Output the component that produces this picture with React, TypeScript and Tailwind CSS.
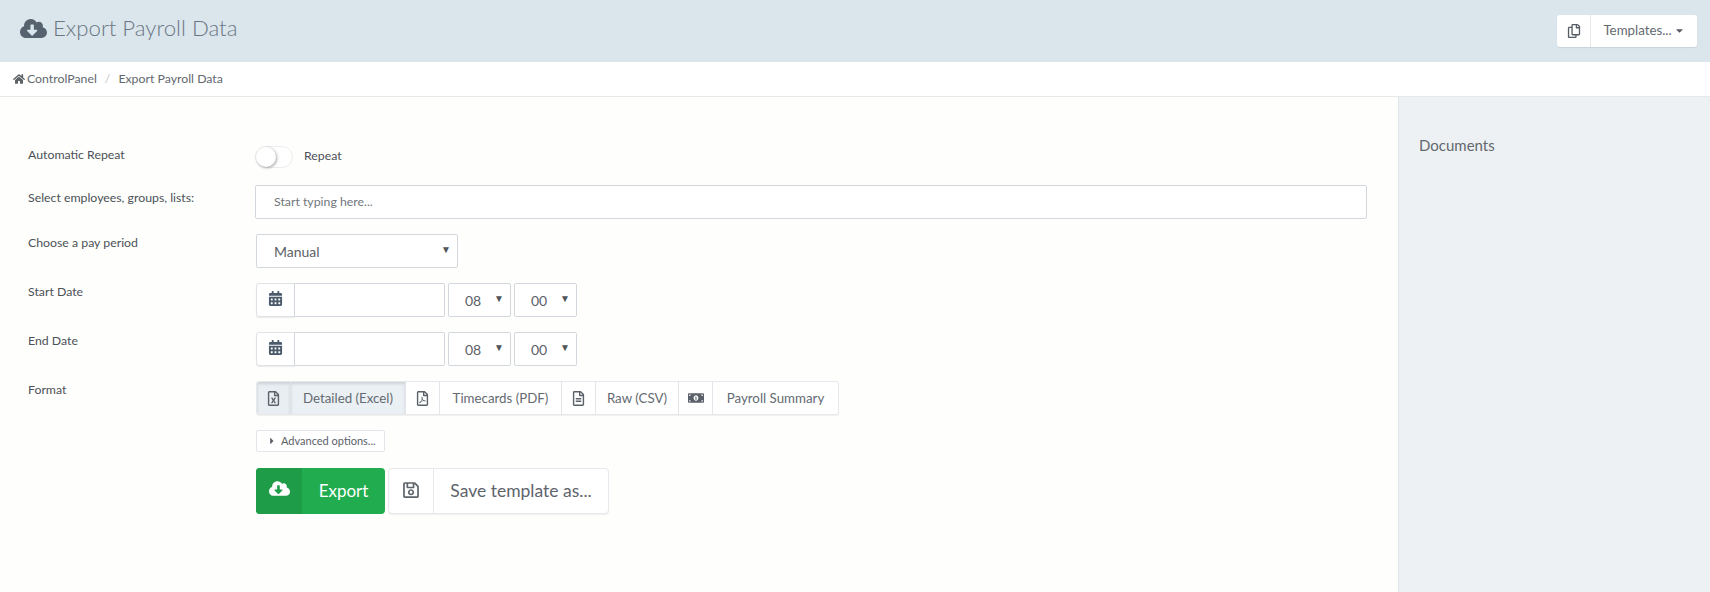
import type { ReactNode } from 'react'
import {
  FaCalendarAlt,
  FaCaretDown,
  FaCaretRight,
  FaCloudDownloadAlt,
  FaHome,
  FaMoneyBillAlt,
  FaRegCopy,
  FaRegFileAlt,
  FaRegFileExcel,
  FaRegFilePdf,
  FaRegSave,
} from 'react-icons/fa'

const font = "font-['Lato','Noto_Sans',sans-serif]"

function Row({ label, className, labelClass = '', children }: { label: string; className: string; labelClass?: string; children: ReactNode }) {
  return (
    <div className={`flex ${className}`}>
      <div className={`w-[255px] shrink-0 pl-[28px] text-[12.3px] leading-[20px] text-[#4b5157] ${labelClass}`}>{label}</div>
      {children}
    </div>
  )
}

function Select({ value, className, textClass }: { value: string; className: string; textClass: string }) {
  return (
    <div className={`relative flex items-center rounded-[2px] border border-[#d3d8de] bg-white text-[#5b6168] ${className}`}>
      <span className={textClass}>{value}</span>
      <span className="absolute right-[6px] top-[8px] text-[10px] leading-[12px] text-[#4f555b]">▼</span>
    </div>
  )
}

function DateRow({ label, className }: { label: string; className: string }) {
  return (
    <Row label={label} className={className} labelClass="-mt-[1px]">
      <div className="flex h-[34px]">
        <div className="ml-[1px] flex w-[39px] items-center justify-center rounded-l-[3px] border border-[#dfe3e8] bg-white shadow-[0_1px_1px_rgba(0,0,0,0.08)]">
          <FaCalendarAlt className="mb-[3px] text-[15px] text-[#4a5a6b]" />
        </div>
        <div className="ml-[-1px] w-[151px] rounded-r-[2px] border border-[#d3d8de] bg-white" />
        <Select value="08" className="ml-[3px] w-[63px]" textClass="pl-[16px] text-[14px]" />
        <Select value="00" className="ml-[3px] w-[63px]" textClass="pl-[16px] text-[14px]" />
      </div>
    </Row>
  )
}

function FormatButton({ icon, label, labelWidth, active }: { icon: ReactNode; label: string; labelWidth: string; active?: boolean }) {
  return (
    <>
      <div className={`flex w-[34px] items-center justify-center border-r border-[#e2e5e9] text-[15px] text-[#5b6168] ${active ? 'bg-[#e9eef2] shadow-[inset_0_2px_3px_rgba(0,0,0,0.12)]' : ''}`}>
        {icon}
      </div>
      <div className={`flex items-center justify-center border-r border-[#e2e5e9] pt-[1px] text-[13.3px] text-[#646a71] ${labelWidth} ${active ? 'bg-[#eaf0f4] shadow-[inset_0_2px_3px_rgba(0,0,0,0.12)]' : ''}`}>
        {label}
      </div>
    </>
  )
}

export default function App() {
  return (
    <div className={`flex h-[592px] flex-col overflow-hidden bg-[#fefefc] ${font}`}>
      <header className="flex h-[62px] shrink-0 items-center justify-between bg-[#dbe5ec] pl-[20px] pr-[13px]">
        <div className="flex items-center text-[#6a7783]">
          <FaCloudDownloadAlt className="mb-[5px] text-[27px] text-[#56636f]" />
          <h1 className="ml-[6px] mb-[5px] text-[22.2px] font-light leading-none">Export Payroll Data</h1>
        </div>
        <div className="mb-[1px] flex h-[32px] rounded-[3px] bg-white shadow-[0_1px_1px_rgba(0,0,0,0.08)]">
          <div className="flex w-[34px] items-center justify-center border-r border-[#e5e8eb]">
            <FaRegCopy className="text-[14px] text-[#565c63]" />
          </div>
          <div className="flex w-[106px] items-center justify-center text-[13.3px] text-[#646a71]">
            Templates...
            <FaCaretDown className="ml-[2px] text-[11px] text-[#565c63]" />
          </div>
        </div>
      </header>
      <nav className="flex h-[35px] shrink-0 items-center border-b border-[#e6e8ea] bg-white pl-[13px] text-[12.3px] text-[#62686e]">
        <FaHome className="mr-[2px] text-[12px] text-[#5c6268]" />
        ControlPanel
        <span className="mx-[8px] text-[#c4c7ca]">/</span>
        Export Payroll Data
      </nav>
      <div className="flex min-h-0 flex-1">
        <main className="w-[1398px] shrink-0 pt-[49px]">
          <Row label="Automatic Repeat" className="h-[22px]" labelClass="-mt-[1px]">
            <div className="flex items-center">
              <div className="h-[22px] w-[38px] rounded-full border border-[#eeeeee] bg-white">
                <div className="h-[20px] w-[20px] rounded-full bg-white shadow-[1px_1px_3px_rgba(0,0,0,0.35)]" />
              </div>
              <span className="ml-[11px] mb-[2px] text-[12.3px] text-[#4b5157]">Repeat</span>
            </div>
          </Row>
          <Row label="Select employees, groups, lists:" className="mt-[17px]" labelClass="pt-[3px]">
            <div className="flex h-[34px] w-[1112px] items-center rounded-[2px] border border-[#d3d8de] bg-white pl-[18px] text-[12.3px] text-[#71767c]">
              Start typing here...
            </div>
          </Row>
          <Row label="Choose a pay period" className="mt-[15px]" labelClass="-mt-[1px]">
            <Select value="Manual" className="ml-[1px] h-[34px] w-[202px]" textClass="pl-[17px] text-[14px]" />
          </Row>
          <DateRow label="Start Date" className="mt-[15px]" />
          <DateRow label="End Date" className="mt-[15px]" />
          <Row label="Format" className="mt-[15px]" labelClass="-mt-[1px]">
            <div className="ml-[1px] flex h-[34px] overflow-hidden rounded-[3px] border border-[#e6e8eb] bg-white shadow-[0_1px_1px_rgba(0,0,0,0.06)]">
              <FormatButton icon={<FaRegFileExcel />} label="Detailed (Excel)" labelWidth="w-[115px]" active />
              <FormatButton icon={<FaRegFilePdf />} label="Timecards (PDF)" labelWidth="w-[122px]" />
              <FormatButton icon={<FaRegFileAlt />} label="Raw (CSV)" labelWidth="w-[83px]" />
              <div className="flex w-[34px] items-center justify-center border-r border-[#e2e5e9] text-[16px] text-[#5b6168]">
                <FaMoneyBillAlt />
              </div>
              <div className="flex w-[125px] items-center justify-center pt-[1px] text-[13.3px] text-[#646a71]">Payroll Summary</div>
            </div>
          </Row>
          <div className="ml-[256px] mt-[15px] flex h-[22px] w-[129px] items-center rounded-[2px] border border-[#e2e5e9] bg-white pl-[10px] text-[11px] text-[#5b6168]">
            <FaCaretRight className="mr-[4px] text-[10px]" />
            Advanced options...
          </div>
          <div className="ml-[256px] mt-[16px] flex h-[46px] gap-[3px]">
            <div className="flex w-[129px] overflow-hidden rounded-[4px] bg-[#21ad4f] text-white">
              <div className="flex w-[46px] items-center justify-center bg-[#1f9c48]">
                <FaCloudDownloadAlt className="mb-[5px] text-[21px]" />
              </div>
              <div className="flex flex-1 items-center justify-center text-[17px]">Export</div>
            </div>
            <div className="flex w-[221px] rounded-[4px] border border-[#e6e8eb] bg-white text-[#5e646b] shadow-[0_1px_1px_rgba(0,0,0,0.06)]">
              <div className="flex w-[45px] items-center justify-center border-r border-[#e6e8eb]">
                <FaRegSave className="mb-[3px] text-[18px]" />
              </div>
              <div className="flex flex-1 items-center justify-center text-[17.5px]">Save template as...</div>
            </div>
          </div>
        </main>
        <aside className="flex-1 border-l border-[#e1e5e9] bg-[#edf1f4] pl-[20px] pt-[38px] text-[15px] leading-[20px] text-[#62686e]">
          Documents
        </aside>
      </div>
    </div>
  )
}
